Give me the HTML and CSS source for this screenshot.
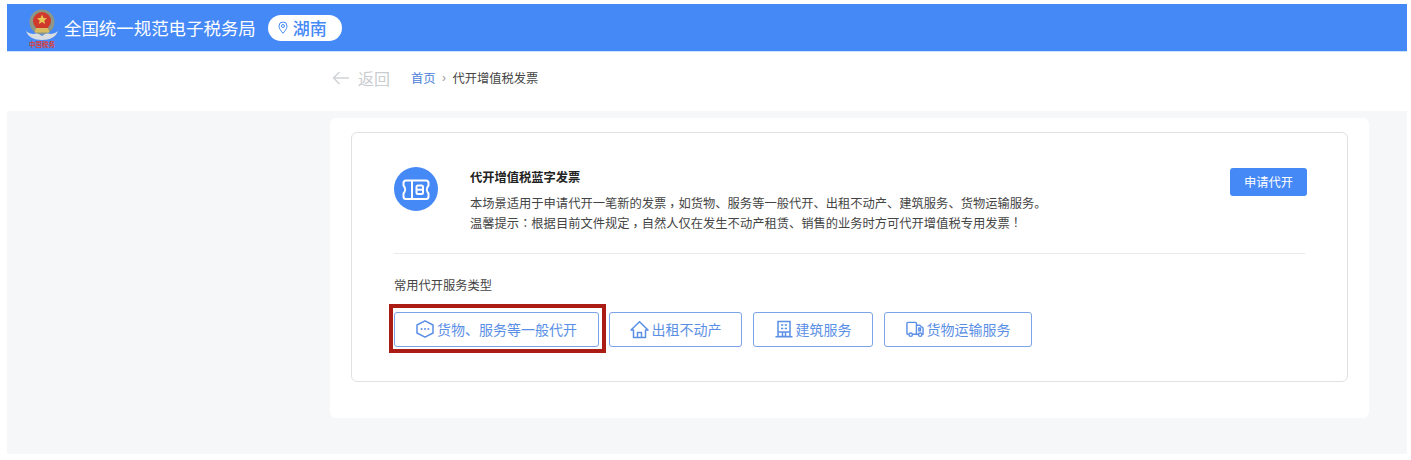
FILE: index.html
```html
<!DOCTYPE html>
<html lang="zh-CN">
<head>
<meta charset="utf-8">
<title>代开增值税发票</title>
<link rel="stylesheet" href="styles.css">
</head>
<body>
<div class="page">
  <header class="topbar">
    <svg class="emblem" width="34" height="42" viewBox="0 0 34 42">
      <path d="M1 23 C6 27 10 26 13 25 L17 28 L21 25 C24 26 28 27 33 23 C31 29 25 32 17 32 C9 32 3 29 1 23Z" fill="#d9dde0"/>
      <circle cx="17" cy="14" r="12.500" fill="#8d9787"/>
      <circle cx="17" cy="13" r="9" fill="#d03a2c"/>
      <path d="M11 20h12l1.500 4.500h-15z" fill="#d9bb62"/>
      <path d="M17 6.500l1.500 3.500 3.500.3-2.700 2.200.9 3.500-3.200-1.900-3.200 1.900.9-3.500-2.700-2.200 3.500-.3z" fill="#e9c954"/>
      <text class="emblem-text" x="17" y="39" text-anchor="middle">中国税务</text>
    </svg>
    <span class="brand">全国统一规范电子税务局</span>
    <span class="region">
      <svg width="10" height="13" viewBox="0 0 10 13" fill="none" stroke="#4589f7" stroke-width="1">
        <path d="M5 12.300C2.500 9.300 1 7.300 1 5a4 4 0 0 1 8 0C9 7.300 7.500 9.300 5 12.300Z"/>
        <circle cx="5" cy="5" r="1.500"/>
      </svg>
      <span>湖南</span>
    </span>
  </header>

  <nav class="crumbs">
    <span class="back">
      <svg width="18" height="14" viewBox="0 0 18 14" fill="none" stroke="#cfd2d6" stroke-width="1.400">
        <path d="M17 7H1.500M7.500 1 1.500 7l6 6"/>
      </svg>
      <span>返回</span>
    </span>
    <a class="crumb-home">首页</a>
    <span class="crumb-sep">›</span>
    <span class="crumb-current">代开增值税发票</span>
  </nav>

  <main class="main">
    <section class="sheet">
      <div class="card">
        <div class="intro">
          <span class="intro-icon">
            <svg width="36" height="36" viewBox="0 0 36 36" fill="none" stroke="#fff" stroke-width="2" stroke-linejoin="round">
              <path d="M8 9.500H28q2.500 0 2.500 2.500V14.500a6 6 0 0 0 0 8v3q0 2.500-2.500 2.500H8q-2.500 0-2.500-2.500v-3a6 6 0 0 0 0-8V12q0-2.500 2.500-2.500Z"/>
              <path d="M14 10V28"/>
              <rect x="18.500" y="14.500" width="6.500" height="8.500" rx="1.500"/>
              <path d="M18.500 18.700H25"/>
            </svg>
          </span>
          <div class="intro-text">
            <h2 class="intro-title">代开增值税蓝字发票</h2>
            <p class="intro-line">本场景适用于申请代开一笔新的发票<span class="punct">，</span>如货物、服务等一般代开、出租不动产、建筑服务、货物运输服务。</p>
            <p class="intro-line">温馨提示<span class="punct">：</span>根据目前文件规定<span class="punct">，</span>自然人仅在发生不动产租赁、销售的业务时方可代开增值税专用发票<span class="punct">！</span></p>
          </div>
          <button class="apply">申请代开</button>
        </div>
        <div class="divider"></div>
        <div class="types">
          <div class="types-label">常用代开服务类型</div>
          <div class="type-row">
            <button class="type type-general">
              <svg width="18" height="18" viewBox="0 0 18 18" fill="none" stroke="#5b8fe6" stroke-width="1.500">
                <path d="M9 .8 17 5V13L9 17.200 1 13V5Z" stroke-linejoin="round"/>
                <circle cx="5.600" cy="9" r="1" fill="#5b8fe6" stroke="none"/>
                <circle cx="9" cy="9" r="1" fill="#5b8fe6" stroke="none"/>
                <circle cx="12.400" cy="9" r="1" fill="#5b8fe6" stroke="none"/>
              </svg>
              <span>货物、服务等一般代开</span>
              <span class="highlight"></span>
            </button>
            <button class="type type-rent">
              <svg width="19" height="19" viewBox="0 0 19 19" fill="none" stroke="#5b8fe6" stroke-width="1.500" stroke-linejoin="round">
                <path d="M1 10 9.500 1.800 18 10h-2.500v7.500h-12V10Z"/>
                <path d="M7.500 17.500v-5h4v5"/>
              </svg>
              <span>出租不动产</span>
            </button>
            <button class="type type-build">
              <svg width="18" height="18" viewBox="0 0 18 18" fill="none" stroke="#5b8fe6" stroke-width="1.500">
                <path d="M3 1.500h12V16.500H3ZM0.500 16.800H17.500"/>
                <path d="M6 5h2.300M9.700 5h2.300M6 8.500h2.300M9.700 8.500h2.300M3 12h12M7.500 16.500v-4.500M10.500 16.500v-4.500"/>
              </svg>
              <span>建筑服务</span>
            </button>
            <button class="type type-ship">
              <svg width="18" height="18" viewBox="0 0 19 18" fill="none" stroke="#5b8fe6" stroke-width="1.500" stroke-linejoin="round">
                <path d="M3 14.500H2a1 1 0 0 1-1-1V3a1 1 0 0 1 1-1h8a1 1 0 0 1 1 1v11.500H7M11 5h3.500L18 8v6.500h-1M11 14.500h2"/>
                <circle cx="5" cy="15" r="1.800"/>
                <circle cx="15" cy="15" r="1.800"/>
                <path d="M13.500 8h1.800v3h-1.800z"/>
              </svg>
              <span>货物运输服务</span>
            </button>
          </div>
        </div>
      </div>
    </section>
  </main>
</div>
</body>
</html>
```

FILE: styles.css
```css
* { box-sizing: border-box; }
html, body { margin: 0; padding: 0; background: #fff; }
body {
  font-family: "Liberation Sans", "Noto Sans CJK SC", sans-serif;
  color: #333;
}
.page {
  width: 1411px;
  height: 460px;
  padding: 4px 4px 6px 7px;
  display: flex;
  flex-direction: column;
  overflow: hidden;
}
.topbar {
  height: 48px;
  flex: none;
  background: #4589f7;
  border-bottom: 1px solid #cfe2fd;
  display: flex;
  align-items: center;
  padding-left: 18px;
  color: #fff;
}
.emblem { flex: none; margin-top: 2px; }
.emblem-text { font-size: 6.500px; fill: #d8403a; font-weight: 700; }
.brand {
  font-size: 17.450px;
  margin-left: 5px;
  white-space: nowrap;
  color: #fff;
}
.region {
  margin-left: 12px;
  width: 74px;
  height: 26px;
  border-radius: 13px;
  background: #fff;
  color: #4589f7;
  display: flex;
  align-items: center;
  padding-left: 10px;
  gap: 5px;
  font-size: 17px;
  font-weight: 500;
}
.crumbs {
  height: 59px;
  flex: none;
  display: flex;
  align-items: center;
  padding: 0 0 7px 325px;
  font-size: 12.250px;
}
.back {
  display: flex;
  align-items: center;
  gap: 8px;
  color: #c9ccd0;
  font-size: 16px;
  width: 79px;
}
.crumb-home { color: #4a80d8; }
.crumb-sep { color: #999; margin: 0 6.500px; font-size: 12px; }
.crumb-current { color: #444; }
.main {
  flex: 1;
  background: #f6f7f9;
  padding: 7px 31px 0 323px;
}
.sheet {
  width: 1039px;
  height: 300px;
  background: #fff;
  border-radius: 6px;
  padding: 14px 21px 0;
}
.card {
  height: 250px;
  border: 1px solid #dfe1e4;
  border-radius: 6px;
  padding: 34px 40px 0 42px;
}
.intro {
  display: flex;
  align-items: flex-start;
  height: 86px;
}
.divider {
  height: 1px;
  margin-right: 2px;
  background: #e9ebee;
}
.intro-icon {
  width: 44px;
  height: 44px;
  flex: none;
  border-radius: 50%;
  background: #4589f7;
  display: flex;
  align-items: center;
  justify-content: center;
}
.intro-text { margin-left: 32px; flex: 1; padding-top: 3px; }
.intro-title {
  margin: 0 0 8px;
  font-size: 12.250px;
  line-height: 16px;
  font-weight: 700;
  color: #222;
}
.intro-line {
  margin: 0;
  font-size: 12.280px;
  line-height: 20px;
  color: #444;
  white-space: nowrap;
}
.punct {
  display: inline-block;
  line-height: 1;
  vertical-align: 1px;
  padding: 0 3.070px;
  font-feature-settings: "halt";
}
.apply {
  flex: none;
  width: 77px;
  height: 28px;
  border: 0;
  border-radius: 3px;
  background: #4589f7;
  color: #fff;
  font: 12.250px "Liberation Sans", "Noto Sans CJK SC", sans-serif;
  margin-top: 1px;
}
.types-label {
  margin-top: 24px;
  font-size: 12.250px;
  line-height: 16px;
  color: #444;
}
.type-row {
  display: flex;
  align-items: center;
  gap: 11px;
  margin-top: 18px;
}
.type {
  position: relative;
  height: 35px;
  border: 1px solid #7ba3e6;
  border-radius: 3px;
  background: #fff;
  color: #5b8fe6;
  display: flex;
  align-items: center;
  justify-content: center;
  gap: 3px;
  padding: 0 0 1px;
  font: 14px "Liberation Sans", "Noto Sans CJK SC", sans-serif;
}
.type-general { width: 205px; margin-right: -1px; }
.type-rent { width: 133px; }
.type-build { width: 120px; }
.type-ship { width: 148px; }
.highlight {
  position: absolute;
  left: -6px;
  top: -9px;
  width: 217px;
  height: 49px;
  border: 4px solid #ab1c14;
  pointer-events: none;
}
```
